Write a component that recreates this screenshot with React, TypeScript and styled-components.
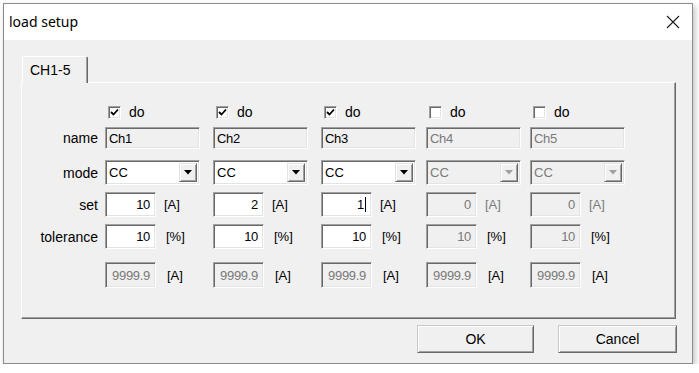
import styled, { createGlobalStyle } from "styled-components";

const GlobalStyle = createGlobalStyle`
  body {
    margin: 0;
    background: #ffffff;
    font-family: "Liberation Sans", Arial, sans-serif;
  }
`;

const Window = styled.div`
  margin: 3px 0 0 3px;
  width: 690px;
  height: 361px;
  box-sizing: border-box;
  border: 1px solid #8c8c8c;
  background: #f0f0f0;
  display: flex;
  flex-direction: column;
  box-shadow: 2px 3px 6px rgba(0, 0, 0, 0.25);
`;

const TitleBar = styled.div`
  height: 36px;
  background: #ffffff;
  display: flex;
  align-items: center;
  justify-content: space-between;
  padding: 0 12px 0 5px;
`;

const Title = styled.span`
  font-family: "Noto Sans", "Open Sans", sans-serif;
  font-size: 14px;
  color: #000;
  margin-top: -1px;
`;

const Body = styled.div`
  flex: 1;
  padding: 16px 16px 0 17px;
  display: flex;
  flex-direction: column;
`;

const TabStrip = styled.div`
  display: flex;
  padding-left: 1px;
`;

const Tab = styled.div`
  width: 66px;
  height: 27px;
  box-sizing: border-box;
  border-top: 1px solid #ffffff;
  border-left: 1px solid #ffffff;
  border-right: 1px solid #696969;
  box-shadow: inset -1px 0 #a0a0a0;
  background: #f0f0f0;
  margin-bottom: -1px;
  position: relative;
  z-index: 1;
  font-size: 14px;
  padding: 5px 0 0 7px;
  color: #000;
  border-radius: 2px 2px 0 0;
`;

const TabPanel = styled.div`
  height: 237px;
  box-sizing: border-box;
  border: 1px solid;
  border-color: #ffffff #696969 #696969 #ffffff;
  box-shadow: inset -1px -1px #a0a0a0;
  padding-top: 21px;
`;

const Row = styled.div<{ $mt: number; $h: number }>`
  display: grid;
  grid-template-columns: 83px 108px 108px 105px 104px 1fr;
  align-items: center;
  height: ${(p) => p.$h}px;
  margin-top: ${(p) => p.$mt}px;
`;

const Label = styled.div`
  text-align: right;
  padding-right: 7px;
  font-size: 14px;
  color: #000;
`;

const Cell = styled.div<{ $gap?: number }>`
  display: flex;
  align-items: center;
  height: 100%;
  gap: ${(p) => p.$gap ?? 0}px;
`;

const CheckWrap = styled.label`
  display: flex;
  align-items: center;
  gap: 8px;
  padding-left: 3px;
  font-size: 14px;
  color: #000;
`;

const CheckBox = styled.span`
  width: 13px;
  height: 13px;
  box-sizing: border-box;
  border: 1px solid;
  border-color: #a0a0a0 #ffffff #ffffff #a0a0a0;
  box-shadow: inset 1px 1px #696969, inset -1px -1px #e3e3e3;
  background: #ffffff;
  display: flex;
  align-items: center;
  justify-content: center;
`;

const Sunken = styled.div<{ $w: number; $h: number; $bg: string; $fg: string; $right?: boolean }>`
  width: ${(p) => p.$w}px;
  height: ${(p) => p.$h}px;
  box-sizing: border-box;
  border: 1px solid;
  border-color: #a0a0a0 #ffffff #ffffff #a0a0a0;
  box-shadow: inset 1px 1px #696969, inset -1px -1px #e3e3e3;
  background: ${(p) => p.$bg};
  color: ${(p) => p.$fg};
  font-size: 13px;
  display: flex;
  align-items: center;
  justify-content: ${(p) => (p.$right ? "flex-end" : "flex-start")};
  padding: 0 5px 0 3px;
  letter-spacing: -0.3px;
`;

const Combo = styled.div<{ $bg: string; $fg: string }>`
  width: 95px;
  height: 25px;
  box-sizing: border-box;
  border: 1px solid;
  border-color: #a0a0a0 #ffffff #ffffff #a0a0a0;
  box-shadow: inset 1px 1px #696969, inset -1px -1px #e3e3e3;
  background: ${(p) => p.$bg};
  color: ${(p) => p.$fg};
  font-size: 13px;
  display: flex;
  align-items: stretch;
  padding: 2px;
`;

const ComboText = styled.div`
  flex: 1;
  display: flex;
  align-items: center;
  padding-left: 1px;
`;

const ComboButton = styled.div`
  width: 18px;
  box-sizing: border-box;
  border: 1px solid;
  border-color: #e3e3e3 #696969 #696969 #e3e3e3;
  box-shadow: inset 1px 1px #ffffff, inset -1px -1px #a0a0a0;
  background: #f0f0f0;
  display: flex;
  align-items: center;
  justify-content: center;
`;

const Unit = styled.span<{ $fg: string }>`
  font-size: 13px;
  color: ${(p) => p.$fg};
`;

const Caret = styled.span`
  display: inline-block;
  width: 1px;
  height: 15px;
  background: #000;
  margin-left: 1px;
`;

const ButtonRow = styled.div`
  display: flex;
  justify-content: flex-end;
  gap: 24px;
  margin-top: 6px;
  margin-right: -1px;
`;

const PushButton = styled.button<{ $w: number }>`
  width: ${(p) => p.$w}px;
  height: 28px;
  box-sizing: border-box;
  border: 1px solid;
  border-color: #c8c8c8 #696969 #696969 #c8c8c8;
  box-shadow: inset 1px 1px #ffffff, inset -1px -1px #a0a0a0;
  background: #f0f0f0;
  font-family: "Liberation Sans", Arial, sans-serif;
  font-size: 14px;
  color: #000;
  padding: 0;
`;

interface Channel {
  name: string;
  on: boolean;
  set: string;
  tol: string;
  focus?: boolean;
}

const channels: Channel[] = [
  { name: "Ch1", on: true, set: "10", tol: "10" },
  { name: "Ch2", on: true, set: "2", tol: "10" },
  { name: "Ch3", on: true, set: "1", tol: "10", focus: true },
  { name: "Ch4", on: false, set: "0", tol: "10" },
  { name: "Ch5", on: false, set: "0", tol: "10" },
];

const GREY = "#7a7a7a";

function CloseIcon() {
  return (
    <svg width="14" height="14" viewBox="0 0 14 14">
      <path d="M1 1 L13 13 M13 1 L1 13" stroke="#1a1a1a" strokeWidth="1.1" fill="none" />
    </svg>
  );
}

function Tick() {
  return (
    <svg width="9" height="9" viewBox="0 0 9 9">
      <path d="M1 4 L3.5 6.5 L8 1.5" stroke="#000" strokeWidth="1.8" fill="none" />
    </svg>
  );
}

function Arrow({ color }: { color: string }) {
  return (
    <svg width="8" height="5" viewBox="0 0 8 5">
      <path d="M0 0 H8 L4 4.5 Z" fill={color} />
    </svg>
  );
}

export default function App() {
  return (
    <>
      <GlobalStyle />
      <Window>
        <TitleBar>
          <Title>load setup</Title>
          <CloseIcon />
        </TitleBar>
        <Body>
          <TabStrip>
            <Tab>CH1-5</Tab>
          </TabStrip>
          <TabPanel>
            <Row $mt={0} $h={16}>
              <span />
              {channels.map((c) => (
                <Cell key={c.name}>
                  <CheckWrap>
                    <CheckBox>{c.on && <Tick />}</CheckBox>
                    do
                  </CheckWrap>
                </Cell>
              ))}
            </Row>
            <Row $mt={7} $h={22}>
              <Label>name</Label>
              {channels.map((c) => (
                <Cell key={c.name}>
                  <Sunken $w={95} $h={22} $bg="#f0f0f0" $fg={c.on ? "#000" : GREY}>
                    {c.name}
                  </Sunken>
                </Cell>
              ))}
            </Row>
            <Row $mt={11} $h={25}>
              <Label>mode</Label>
              {channels.map((c) => (
                <Cell key={c.name}>
                  <Combo $bg={c.on ? "#fff" : "#f0f0f0"} $fg={c.on ? "#000" : GREY}>
                    <ComboText>CC</ComboText>
                    <ComboButton>
                      <Arrow color={c.on ? "#000" : "#a0a0a0"} />
                    </ComboButton>
                  </Combo>
                </Cell>
              ))}
            </Row>
            <Row $mt={7} $h={25}>
              <Label>set</Label>
              {channels.map((c) => (
                <Cell key={c.name} $gap={8}>
                  <Sunken $w={51} $h={25} $bg={c.on ? "#fff" : "#f0f0f0"} $fg={c.on ? "#000" : GREY} $right>
                    {c.set}
                    {c.focus && <Caret />}
                  </Sunken>
                  <Unit $fg={c.on ? "#000" : GREY}>[A]</Unit>
                </Cell>
              ))}
            </Row>
            <Row $mt={7} $h={25}>
              <Label>tolerance</Label>
              {channels.map((c) => (
                <Cell key={c.name} $gap={10}>
                  <Sunken $w={51} $h={25} $bg={c.on ? "#fff" : "#f0f0f0"} $fg={c.on ? "#000" : GREY} $right>
                    {c.tol}
                  </Sunken>
                  <Unit $fg="#000">[%]</Unit>
                </Cell>
              ))}
            </Row>
            <Row $mt={13} $h={26}>
              <span />
              {channels.map((c) => (
                <Cell key={c.name} $gap={11}>
                  <Sunken $w={51} $h={26} $bg="#f0f0f0" $fg={GREY} $right>
                    9999.9
                  </Sunken>
                  <Unit $fg="#000">[A]</Unit>
                </Cell>
              ))}
            </Row>
          </TabPanel>
          <ButtonRow>
            <PushButton $w={117}>OK</PushButton>
            <PushButton $w={119}>Cancel</PushButton>
          </ButtonRow>
        </Body>
      </Window>
    </>
  );
}
